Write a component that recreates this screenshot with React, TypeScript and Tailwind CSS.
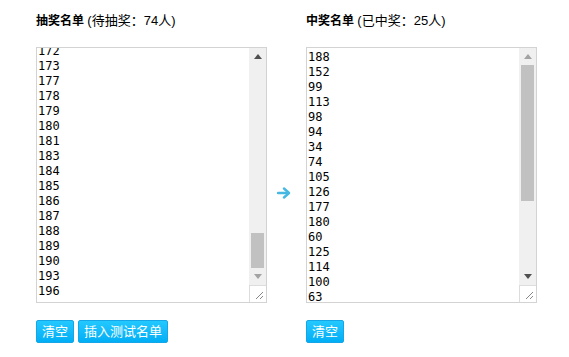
import React from "react";

const pending = ["172", "173", "177", "178", "179", "180", "181", "183", "184", "185", "186", "187", "188", "189", "190", "193", "196"];
const winners = ["188", "152", "99", "113", "98", "94", "34", "74", "105", "126", "177", "180", "60", "125", "114", "100", "63"];

function Triangle({ up, dark }: { up?: boolean; dark?: boolean }) {
  return (
    <svg width="8" height="5" viewBox="0 0 8 5">
      <path d={up ? "M0 5 L4 0 L8 5 Z" : "M0 0 L8 0 L4 5 Z"} fill={dark ? "#505050" : "#a3a3a3"} />
    </svg>
  );
}

function FakeScrollbar({ thumbTop, thumbHeight, upDark, downDark }: { thumbTop: number; thumbHeight: number; upDark: boolean; downDark: boolean }) {
  return (
    <div className="flex w-[17px] shrink-0 flex-col bg-[#f0f0f0]">
      <div className="flex h-[17px] items-center justify-center">
        <Triangle up dark={upDark} />
      </div>
      <div className="relative flex-1">
        <div
          className="absolute left-[2px] right-[2px] bg-[#c1c1c1]"
          style={{ top: thumbTop, height: thumbHeight }}
        />
      </div>
      <div className="flex h-[17px] items-center justify-center">
        <Triangle dark={downDark} />
      </div>
      <div className="flex h-[17px] items-end justify-end border-l border-t border-[#dcdcdc] bg-white p-[2px]">
        <svg width="10" height="10" viewBox="0 0 10 10">
          <path d="M9 2 L2 9 M9 6 L6 9" stroke="#888" strokeWidth="1" />
        </svg>
      </div>
    </div>
  );
}

function ListBox({ items, offset, bar }: { items: string[]; offset: string; bar: React.ReactNode }) {
  return (
    <div className="flex h-[256px] w-[231px] border border-[#d3d3d3] bg-white">
      <div className="flex-1 overflow-hidden pl-[1px]">
        <div className={offset}>
          {items.map((n, i) => (
            <div key={i} className="h-[15px] text-[12px] leading-[15px] text-black" style={{ fontFamily: '"DejaVu Sans Mono", "Liberation Mono", monospace' }}>
              {n}
            </div>
          ))}
        </div>
      </div>
      {bar}
    </div>
  );
}

function Btn({ children }: { children: React.ReactNode }) {
  return (
    <button className="h-[23px] rounded-[2px] border border-[#14a6e6] bg-gradient-to-b from-[#22c8ff] to-[#00aef5] px-[5px] text-[13px] leading-[21px] text-white">
      {children}
    </button>
  );
}

export default function App() {
  return (
    <div
      className="flex h-[357px] w-[569px] bg-white pl-[36px] pt-[13px]"
      style={{ fontFamily: '"Liberation Sans", "Noto Sans CJK SC", sans-serif' }}
    >
      <div className="flex w-[231px] flex-col">
        <div className="h-[16px] text-[12px] leading-[16px] text-black">
          <span className="font-bold">抽奖名单</span> <span className="text-[13px]">(待抽奖：74人)</span>
        </div>
        <div className="mt-[18px]">
          <ListBox
            items={pending}
            offset="-mt-[4px]"
            bar={<FakeScrollbar thumbTop={168} thumbHeight={35} upDark downDark={false} />}
          />
        </div>
        <div className="mt-[17px] flex gap-[4px]">
          <Btn>清空</Btn>
          <Btn>插入测试名单</Btn>
        </div>
      </div>

      <div className="flex w-[39px] flex-col items-center justify-center pr-[6px] pt-[16px]">
        <svg width="14" height="12" viewBox="0 0 14 12">
          <path d="M1 6 H11" stroke="#47b8e2" strokeWidth="2.4" strokeLinecap="round" />
          <path d="M7 1.5 L12 6 L7 10.5" stroke="#47b8e2" strokeWidth="2.4" fill="none" strokeLinecap="round" strokeLinejoin="round" />
        </svg>
      </div>

      <div className="flex w-[232px] flex-col">
        <div className="h-[16px] text-[12px] leading-[16px] text-black">
          <span className="font-bold">中奖名单</span> <span className="text-[13px]">(已中奖：25人)</span>
        </div>
        <div className="mt-[18px]">
          <ListBox
            items={winners}
            offset="pt-[2px]"
            bar={<FakeScrollbar thumbTop={0} thumbHeight={136} upDark={false} downDark />}
          />
        </div>
        <div className="mt-[17px] flex gap-[4px]">
          <Btn>清空</Btn>
        </div>
      </div>
    </div>
  );
}
